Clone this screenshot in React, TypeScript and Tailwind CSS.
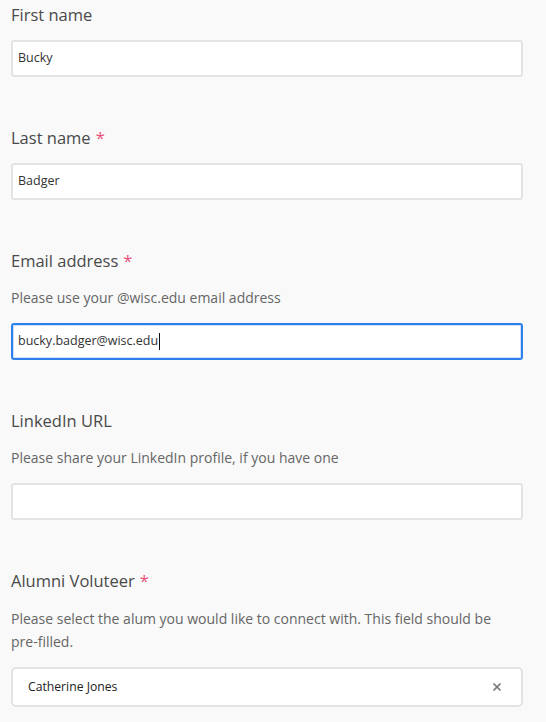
import { X } from 'lucide-react'

type Field = {
  label: string
  required?: boolean
  help?: string
  value?: string
  focused?: boolean
}

const fields: Field[] = [
  { label: 'First name', value: 'Bucky' },
  { label: 'Last name', required: true, value: 'Badger' },
  {
    label: 'Email address',
    required: true,
    help: 'Please use your @wisc.edu email address',
    value: 'bucky.badger@wisc.edu',
    focused: true,
  },
  { label: 'LinkedIn URL', help: 'Please share your LinkedIn profile, if you have one', value: '' },
]

function Label({ text, required }: { text: string; required?: boolean }) {
  return (
    <div className="text-[16.5px] leading-[22px] text-[#4a4a4a]">
      {text}
      {required && <span className="ml-[5px] text-[#e8507a]">*</span>}
    </div>
  )
}

export default function App() {
  return (
    <div
      className="min-h-[722px] w-[546px] bg-[#f9f9f9] px-[11px] pt-[4px]"
      style={{ fontFamily: '"Open Sans", "Noto Sans", sans-serif' }}
    >
      {fields.map((f) => (
        <div key={f.label} className="mb-[50px]">
          <Label text={f.label} required={f.required} />
          {f.help && <p className="mt-[15px] text-[14px] leading-[22px] text-[#666]">{f.help}</p>}
          <div
            className={
              f.focused
                ? 'mt-[14px] flex h-[37px] w-[512px] items-center rounded-[3px] border-2 border-[#2f80ed] bg-white px-[5px] shadow-[inset_0_0_0_1px_#cfe0fb]'
                : 'mt-[14px] flex h-[37px] w-[512px] items-center rounded-[3px] border-2 border-[#e3e3e3] bg-white px-[5px]'
            }
          >
            <span className="text-[12.5px] text-[#333]">{f.value}</span>
            {f.focused && <span className="ml-px h-[17px] w-px bg-[#111]" />}
          </div>
        </div>
      ))}
      <div>
        <Label text="Alumni Voluteer" required />
        <p className="mt-[15px] max-w-[495px] text-[14px] leading-[23px] text-[#666]">
          Please select the alum you would like to connect with. This field should be pre-filled.
        </p>
        <div className="mt-[14px] flex h-[40px] w-[512px] items-center justify-between rounded-[5px] border-2 border-[#e3e3e3] bg-white pl-[15px] pr-[18px]">
          <span className="text-[12.2px] text-[#222]">Catherine Jones</span>
          <X size={12} strokeWidth={3.5} className="text-[#777]" />
        </div>
      </div>
    </div>
  )
}
